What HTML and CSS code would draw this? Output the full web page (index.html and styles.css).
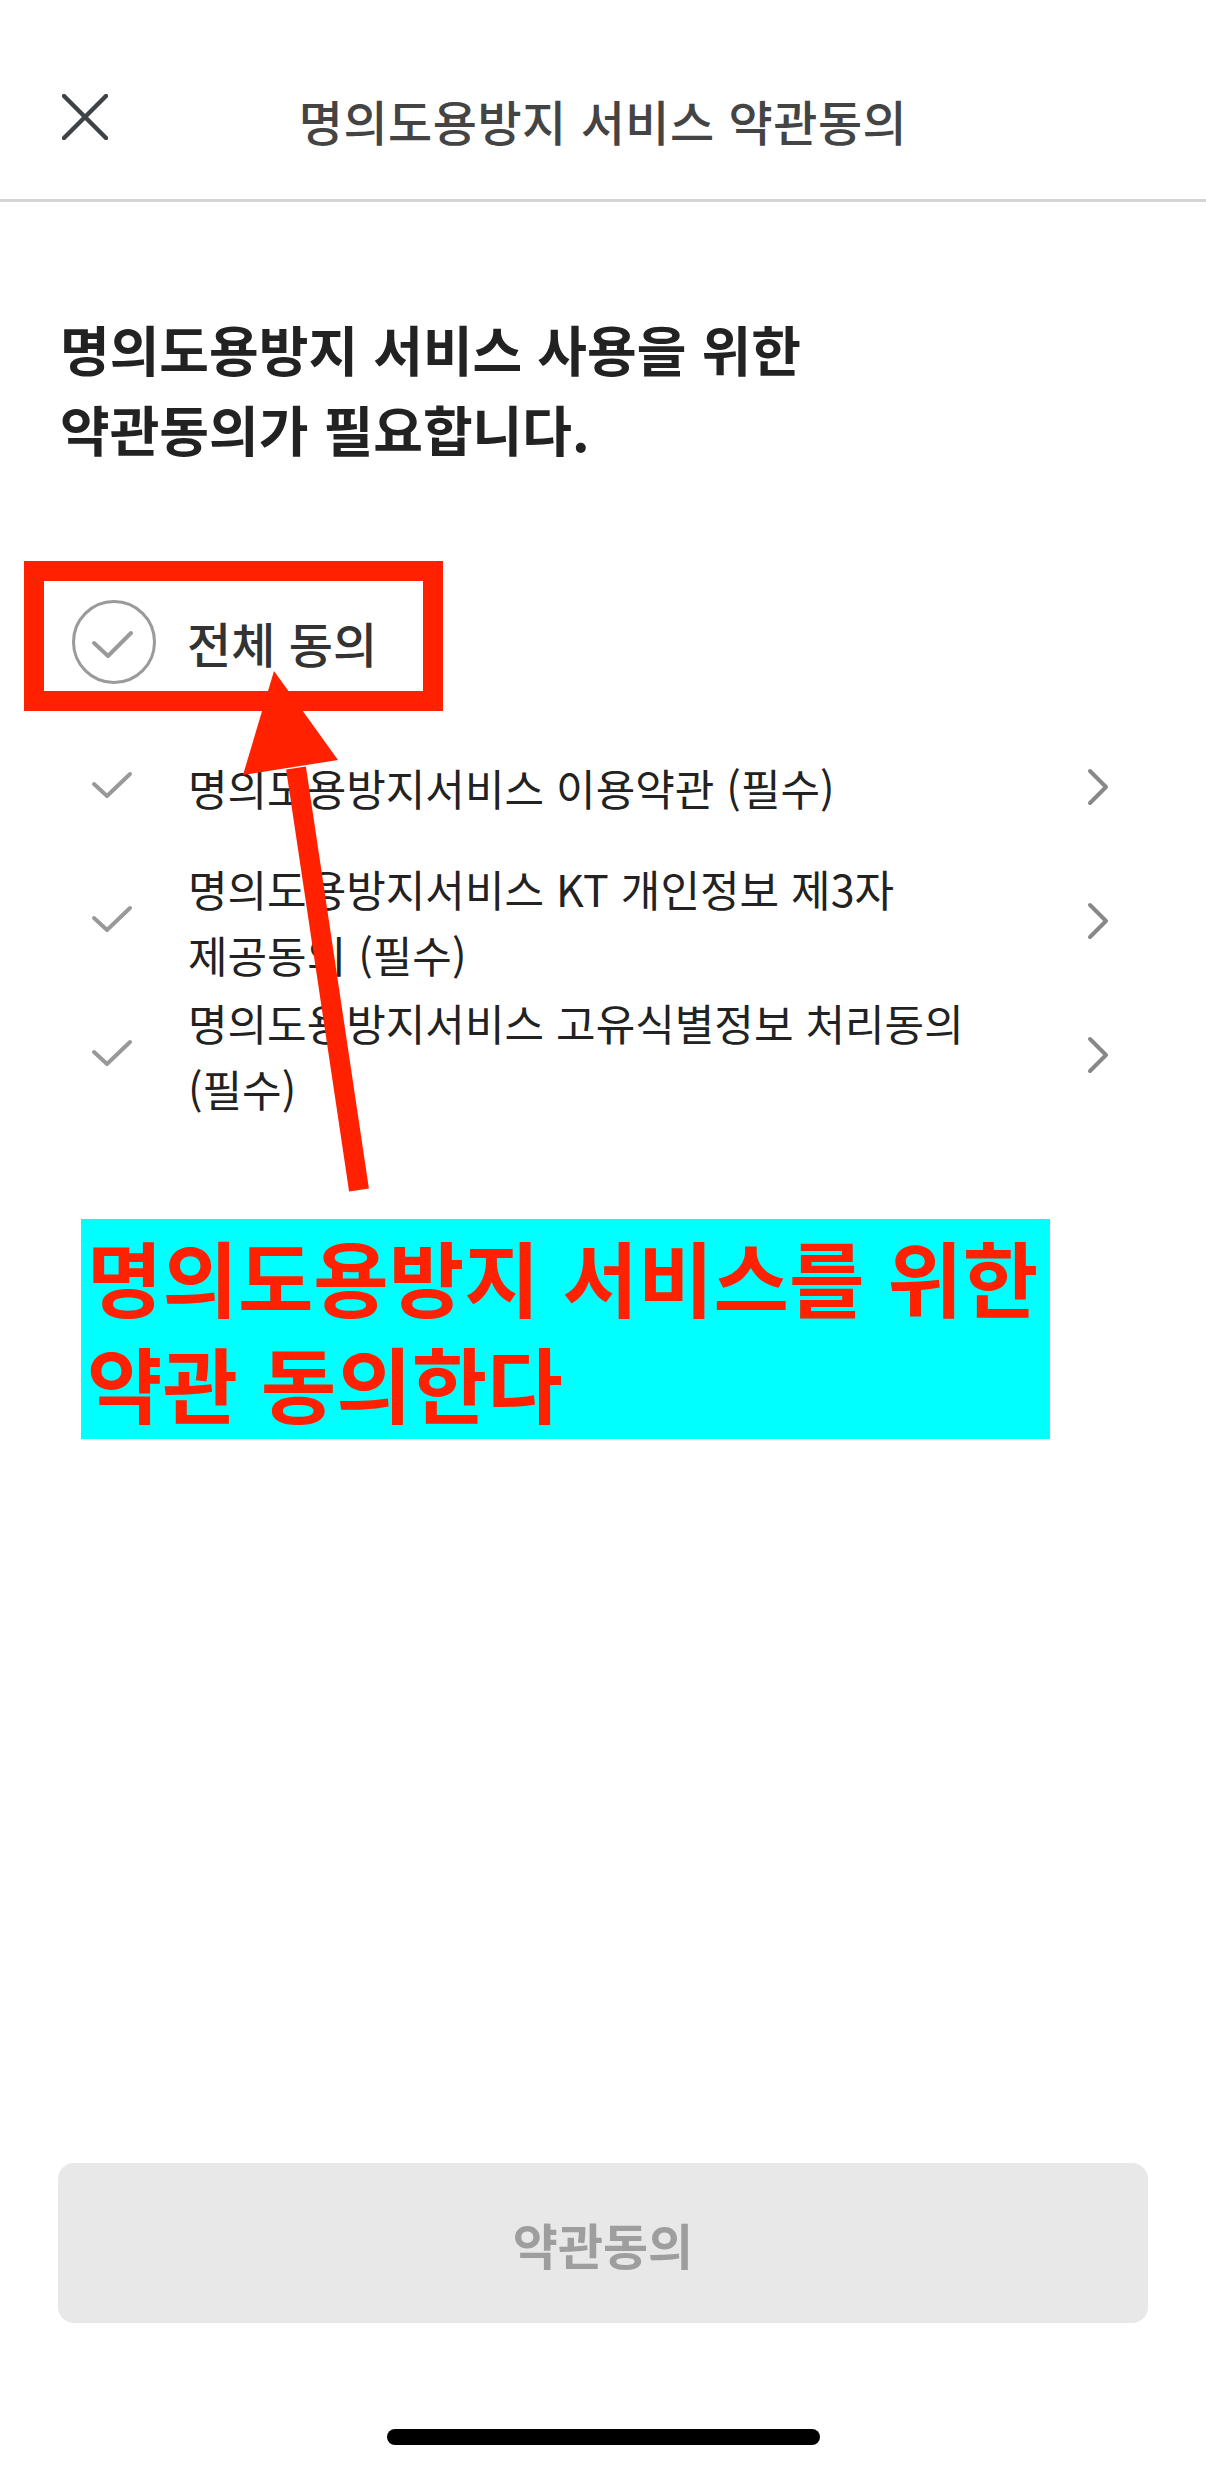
FILE: index.html
```html
<!DOCTYPE html>
<html lang="ko">
<head>
    <meta charset="UTF-8">
    <meta name="viewport" content="width=device-width, initial-scale=1.0">
    <title>명의도용방지 서비스 약관동의</title>
    <link rel="stylesheet" href="styles.css">
</head>
<body>
    <header class="topbar">
        <button class="close-btn" aria-label="닫기">
            <svg width="46" height="46" viewBox="0 0 46 46">
                <path d="M2 2 L44 44 M44 2 L2 44" stroke="#3d4347" stroke-width="4.5" stroke-linecap="round" fill="none"/>
            </svg>
        </button>
        <h1 class="topbar-title">명의도용방지 서비스 약관동의</h1>
    </header>

    <main class="content">
        <h2 class="lead">명의도용방지 서비스 사용을 위한<br>약관동의가 필요합니다.</h2>

        <div class="agree-all">
            <svg class="circle-check" width="86" height="86" viewBox="0 0 86 86">
                <circle cx="43" cy="43" r="40.5" stroke="#9a9a9a" stroke-width="3" fill="none"/>
                <path d="M23 44 L37 57 L60 34" stroke="#9a9a9a" stroke-width="4" stroke-linecap="round" stroke-linejoin="round" fill="none"/>
            </svg>
            <span class="agree-all-label">전체 동의</span>
        </div>

        <ul class="terms">
            <li class="term">
                <svg class="term-check" width="44" height="34" viewBox="0 0 44 34">
                    <path d="M4 14 L17 26 L40 4" stroke="#999" stroke-width="4" stroke-linecap="round" stroke-linejoin="round" fill="none"/>
                </svg>
                <span class="term-text">명의도용방지서비스 이용약관 (필수)</span>
                <svg class="chevron" width="28" height="40" viewBox="0 0 28 40">
                    <path d="M6 4 L22 20 L6 36" stroke="#888" stroke-width="4" stroke-linecap="round" stroke-linejoin="round" fill="none"/>
                </svg>
            </li>
            <li class="term">
                <svg class="term-check" width="44" height="34" viewBox="0 0 44 34">
                    <path d="M4 14 L17 26 L40 4" stroke="#999" stroke-width="4" stroke-linecap="round" stroke-linejoin="round" fill="none"/>
                </svg>
                <span class="term-text">명의도용방지서비스 KT 개인정보 제3자 제공동의 (필수)</span>
                <svg class="chevron" width="28" height="40" viewBox="0 0 28 40">
                    <path d="M6 4 L22 20 L6 36" stroke="#888" stroke-width="4" stroke-linecap="round" stroke-linejoin="round" fill="none"/>
                </svg>
            </li>
            <li class="term">
                <svg class="term-check" width="44" height="34" viewBox="0 0 44 34">
                    <path d="M4 14 L17 26 L40 4" stroke="#999" stroke-width="4" stroke-linecap="round" stroke-linejoin="round" fill="none"/>
                </svg>
                <span class="term-text">명의도용방지서비스 고유식별정보 처리동의 (필수)</span>
                <svg class="chevron" width="28" height="40" viewBox="0 0 28 40">
                    <path d="M6 4 L22 20 L6 36" stroke="#888" stroke-width="4" stroke-linecap="round" stroke-linejoin="round" fill="none"/>
                </svg>
            </li>
        </ul>
    </main>

    <footer class="bottom">
        <button class="submit-btn" disabled>약관동의</button>
        <div class="home-bar"></div>
    </footer>

    <!-- markup layer drawn on top of the screen -->
    <div class="mark-box"></div>
    <svg class="mark-arrow" width="150" height="540" viewBox="0 0 150 540">
        <path d="M66 108 L129 530" stroke="#ff2100" stroke-width="20" fill="none"/>
        <polygon points="44,11 13,115 108,100" fill="#ff2100"/>
    </svg>
    <div class="mark-note">명의도용방지 서비스를 위한<br>약관 동의한다</div>
</body>
</html>
```

FILE: styles.css
```css
* {
    box-sizing: border-box;
}
body {
    margin: 0;
    width: 1206px;
    height: 2469px;
    position: relative;
    display: flex;
    flex-direction: column;
    background: #fff;
    font-family: "Noto Sans CJK KR", "Noto Sans", sans-serif;
    color: #222;
}

/* top bar */
.topbar {
    height: 202px;
    padding-top: 40px;
    border-bottom: 3px solid #d4d4d4;
    display: flex;
    align-items: center;
    justify-content: center;
    position: relative;
}
.close-btn {
    position: absolute;
    left: 62px;
    top: 94px;
    padding: 0;
    border: none;
    background: none;
    width: 46px;
    height: 46px;
}
.close-btn svg {
    display: block;
}
.topbar-title {
    margin: 0;
    font-size: 48px;
    font-weight: 500;
    letter-spacing: 0.5px;
    color: #444;
    line-height: 1;
}

/* body content */
.content {
    padding: 0 60px;
}
.lead {
    margin: 107px 0 0;
    font-size: 54px;
    line-height: 80px;
    font-weight: 700;
    color: #222;
}
.agree-all {
    margin-top: 123px;
    height: 100px;
    display: flex;
    align-items: center;
    padding-left: 11px;
}
.circle-check {
    display: block;
}
.agree-all-label {
    margin-left: 30px;
    font-size: 48px;
    font-weight: 500;
    color: #333;
}

.terms {
    list-style: none;
    margin: 29px 0 0;
    padding: 0;
    display: flex;
    flex-direction: column;
    gap: 2px;
}
.term {
    min-height: 132px;
    display: flex;
    align-items: center;
}
.term-check {
    flex: none;
    margin-left: 30px;
}
.term-text {
    flex: 1;
    margin-left: 54px;
    padding-right: 72px;
    font-size: 43px;
    line-height: 66px;
    color: #222;
    word-break: keep-all;
}
.chevron {
    flex: none;
    margin-right: 34px;
}

/* bottom button */
.bottom {
    margin-top: auto;
    display: flex;
    flex-direction: column;
    align-items: center;
}
.submit-btn {
    width: 1090px;
    height: 160px;
    border: none;
    border-radius: 16px;
    background: #e8e8e8;
    color: #9e9e9e;
    font-family: inherit;
    font-size: 49px;
    font-weight: 700;
}
.home-bar {
    margin: 106px 0 24px;
    width: 433px;
    height: 16px;
    border-radius: 8px;
    background: #000;
}

/* red markup */
.mark-box {
    position: absolute;
    left: 24px;
    top: 561px;
    width: 419px;
    height: 150px;
    border: 20px solid #ff2100;
}
.mark-arrow {
    position: absolute;
    left: 230px;
    top: 660px;
}
.mark-note {
    position: absolute;
    left: 81px;
    top: 1219px;
    width: 969px;
    height: 220px;
    padding: 4px 6px;
    background: #00ffff;
    color: #ff2100;
    font-size: 82px;
    font-weight: 700;
    line-height: 106px;
    white-space: nowrap;
}
```
